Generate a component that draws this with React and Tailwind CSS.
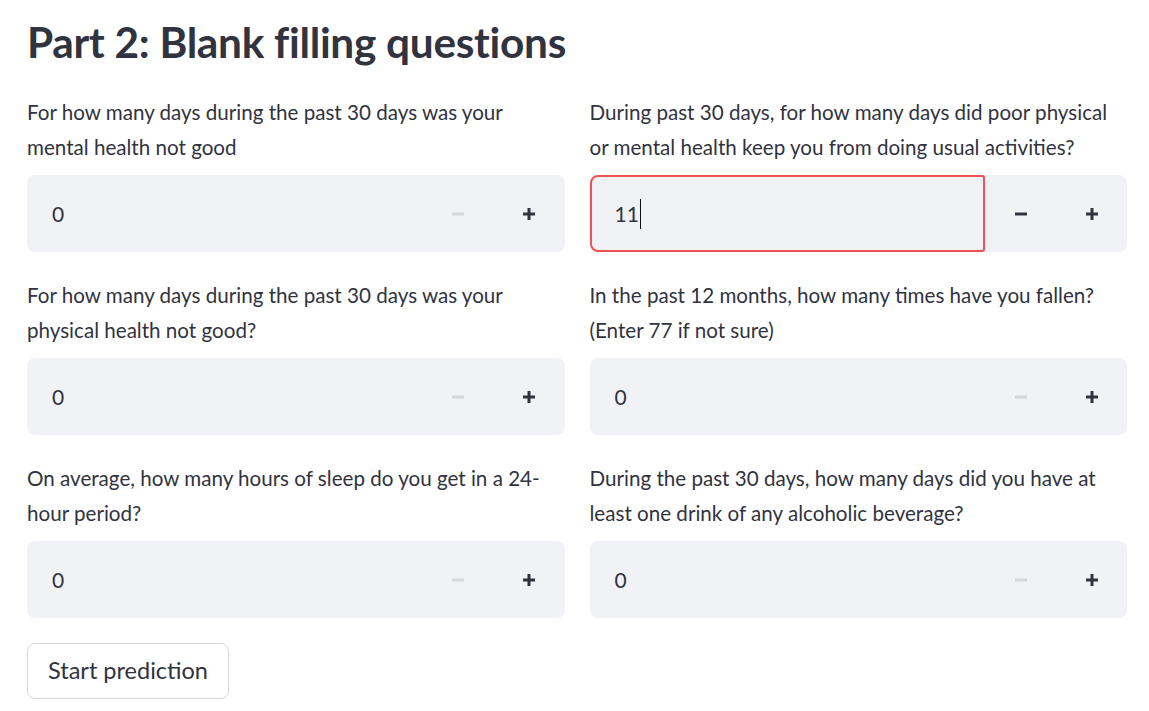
const questions = [
    { lines: ['For how many days during the past 30 days was your', 'mental health not good'], value: '0' },
    { lines: ['During past 30 days, for how many days did poor physical', 'or mental health keep you from doing usual activities?'], value: '11', focused: true },
    { lines: ['For how many days during the past 30 days was your', 'physical health not good?'], value: '0' },
    { lines: ['In the past 12 months, how many times have you fallen?', '(Enter 77 if not sure)'], value: '0' },
    { lines: ['On average, how many hours of sleep do you get in a 24-', 'hour period?'], value: '0' },
    { lines: ['During the past 30 days, how many days did you have at', 'least one drink of any alcoholic beverage?'], value: '0' },
];

function MinusIcon({ muted }) {
    return (
        <svg width="14" height="14" viewBox="0 0 14 14" className={muted ? 'text-[#d5d7dd]' : 'text-[#31333f]'}>
            <rect x="1" y="5.5" width="12" height="3" fill="currentColor" />
        </svg>
    );
}

function PlusIcon() {
    return (
        <svg width="14" height="14" viewBox="0 0 14 14" className="text-[#31333f]">
            <rect x="1" y="5.5" width="12" height="3" fill="currentColor" />
            <rect x="5.5" y="1" width="3" height="12" fill="currentColor" />
        </svg>
    );
}

function NumberField({ lines, value, focused }) {
    const muted = value === '0';
    return (
        <div className="flex flex-col">
            <div className="text-[20.6px] leading-[35px] text-[#31333f]">
                {lines.map((line) => (
                    <div key={line} className="whitespace-nowrap">
                        {line}
                    </div>
                ))}
            </div>
            <div className="mt-[10px] flex h-[77px] rounded-lg bg-[#f0f2f6]">
                <div
                    className={
                        focused
                            ? 'flex flex-1 items-center rounded-l-lg rounded-r-[3px] border-2 border-[#ef5252] pl-[23px]'
                            : 'flex flex-1 items-center pl-[25px]'
                    }
                >
                    <span className="text-[21px] text-[#31333f]">{value}</span>
                    {focused && <span className="ml-px h-[30px] w-px bg-[#111]" />}
                </div>
                <div className="flex w-[142px]">
                    <div className="flex flex-1 items-center justify-center">
                        <MinusIcon muted={muted} />
                    </div>
                    <div className="flex flex-1 items-center justify-center">
                        <PlusIcon />
                    </div>
                </div>
            </div>
        </div>
    );
}

export default function App() {
    return (
        <div className="min-h-screen bg-white font-['Lato','Liberation_Sans',sans-serif] text-[#31333f]">
            <div className="ml-[27px] w-[1100px] pt-[15px]">
                <h2 className="text-[42.4px] font-bold leading-[54px] tracking-[-0.3px]">
                    Part 2: Blank filling questions
                </h2>
                <div className="mt-[26px] grid grid-cols-2 gap-x-[25px] gap-y-[26px]">
                    {questions.map((q) => (
                        <NumberField key={q.lines[0] + q.lines[1]} {...q} />
                    ))}
                </div>
                <button
                    type="button"
                    className="mt-[25px] h-[56px] rounded-lg border border-[#d6d6d9] bg-white px-[20px] text-[23.5px] text-[#31333f]"
                >
                    Start prediction
                </button>
            </div>
        </div>
    );
}
